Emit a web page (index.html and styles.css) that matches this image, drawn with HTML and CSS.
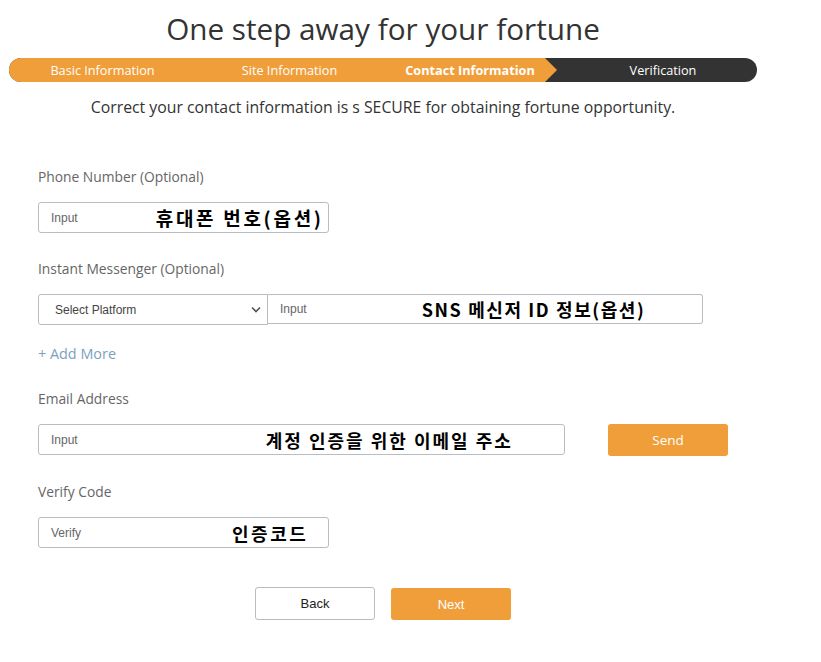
FILE: index.html
```html
<!DOCTYPE html>
<html>
<head>
<meta charset="utf-8">
<link rel="stylesheet" href="styles.css">
</head>
<body>
<div class="page">
  <h1 class="title">One step away for your fortune</h1>
  <div class="steps">
    <div class="step s1">Basic Information</div>
    <div class="step s2">Site Information</div>
    <div class="step s3 current">Contact Information</div>
    <div class="step s4">Verification</div>
  </div>
  <p class="subtitle">Correct your contact information is s SECURE for obtaining fortune opportunity.</p>

  <form class="form">
    <div class="group g-phone">
      <div class="label">Phone Number (Optional)</div>
      <div class="field w-short">
        <span class="ph">Input</span>
        <span class="ko ko-phone">휴대폰 번호(옵션)</span>
      </div>
    </div>

    <div class="group g-im">
      <div class="label">Instant Messenger (Optional)</div>
      <div class="row">
        <div class="select">
          <span class="ph sel">Select Platform</span>
          <svg class="chev" width="10" height="7" viewBox="0 0 10 7"><path d="M1 1.5 L5 5.5 L9 1.5" fill="none" stroke="#555" stroke-width="1.6"/></svg>
        </div>
        <div class="field w-im">
          <span class="ph">Input</span>
          <span class="ko ko-sns">SNS 메신저 ID 정보(옵션)</span>
        </div>
      </div>
      <div class="add">+ Add More</div>
    </div>

    <div class="group g-email">
      <div class="label">Email Address</div>
      <div class="row email-row">
        <div class="field w-email">
          <span class="ph">Input</span>
          <span class="ko ko-email">계정 인증을 위한 이메일 주소</span>
        </div>
        <div class="btn btn-orange send">Send</div>
      </div>
    </div>

    <div class="group g-verify">
      <div class="label">Verify Code</div>
      <div class="field w-short">
        <span class="ph">Verify</span>
        <span class="ko ko-verify">인증코드</span>
      </div>
    </div>

    <div class="actions">
      <div class="btn btn-white">Back</div>
      <div class="btn btn-orange">Next</div>
    </div>
  </form>
</div>
</body>
</html>
```

FILE: styles.css
```css
* { box-sizing: border-box; }
html, body { margin: 0; padding: 0; background: #fff; }
body { font-family: "Open Sans", "Noto Sans", sans-serif; color: #333; }

.page { width: 748px; margin-left: 9px; }

.title {
  margin: 0;
  padding-top: 8px;
  height: 58px;
  font-size: 29.7px;
  font-weight: 400;
  line-height: 42px;
  text-align: center;
  color: #333;
}

.steps {
  display: flex;
  height: 24px;
  border-radius: 12px;
  overflow: hidden;
  background: #333;
  font-size: 12.7px;
  color: #fff;
  line-height: 24px;
}
.step { text-align: center; }
.s1 { width: 187px; background: #f09e3a; }
.s2 { width: 187px; background: #f09e3a; }
.s3 { width: 162px; background: #f09e3a; font-weight: 700; padding-left: 12px; position: relative; }
.s3::after {
  content: "";
  position: absolute;
  right: -12px;
  top: 0;
  border-top: 12px solid transparent;
  border-bottom: 12px solid transparent;
  border-left: 12px solid #f09e3a;
}
.s4 { flex: 1; padding-left: 24px; }

.subtitle {
  margin: 0;
  padding-top: 13px;
  height: 70px;
  text-align: center;
  font-size: 15.8px;
  line-height: 24px;
  color: #333;
}

.form { padding-left: 29px; }

.label {
  font-size: 13.8px;
  color: #666;
  line-height: 20px;
  height: 35px;
}

.g-phone { margin-top: 15px; }
.g-im { margin-top: 26px; }
.g-email { margin-top: 25px; }
.g-verify { margin-top: 26px; }

.field {
  height: 31px;
  border: 1px solid #b9bcc2;
  border-radius: 3px;
  display: flex;
  align-items: center;
  padding-left: 12px;
  background: #fff;
}
.w-short { width: 291px; }
.w-im { width: 435px; height: 30px; border-radius: 0 3px 3px 0; border-left-width: 0; padding-left: 12px; }
.w-email { width: 527px; }

.ph {
  font-family: "Liberation Sans", Arial, sans-serif;
  font-size: 12px;
  color: #666;
  flex-shrink: 0;
}

.ko {
  font-family: "Noto Sans CJK KR", sans-serif;
  font-weight: 700;
  font-size: 18px;
  letter-spacing: 2.6px;
  color: #000;
  white-space: nowrap;
  flex-shrink: 0;
}
.ko-phone { margin-left: 78px; font-size: 19px; letter-spacing: 2.7px; }
.ko-sns { margin-left: 115px; letter-spacing: 1.6px; }
.ko-email { margin-left: 188px; letter-spacing: 2px; }
.ko-verify { margin-left: 151px; letter-spacing: 2.5px; }

.row { display: flex; align-items: flex-start; }

.select {
  width: 230px;
  height: 31px;
  border: 1px solid #b9bcc2;
  border-radius: 3px 0 0 3px;
  display: flex;
  align-items: center;
  justify-content: space-between;
  padding: 0 6px 0 16px;
}
.sel { color: #444; }
.chev { display: block; }

.add {
  margin-top: 19px;
  font-size: 14.4px;
  line-height: 20px;
  color: #7b9fc0;
}

.email-row { gap: 43px; }

.btn {
  width: 120px;
  display: flex;
  align-items: center;
  justify-content: center;
  font-family: "Liberation Sans", Arial, sans-serif;
  font-size: 13px;
  border-radius: 3px;
}
.btn-orange { background: #f09e3a; color: #fff; }
.send { height: 32px; font-family: "Open Sans", sans-serif; font-size: 13.5px; }

.actions {
  display: flex;
  gap: 16px;
  margin-top: 39px;
  padding-left: 217px;
}
.actions .btn { height: 33px; }
.btn-white { border: 1px solid #b9bcc2; color: #222; background: #fff; }
.actions .btn-orange { height: 32px; margin-top: 1px; }
```
